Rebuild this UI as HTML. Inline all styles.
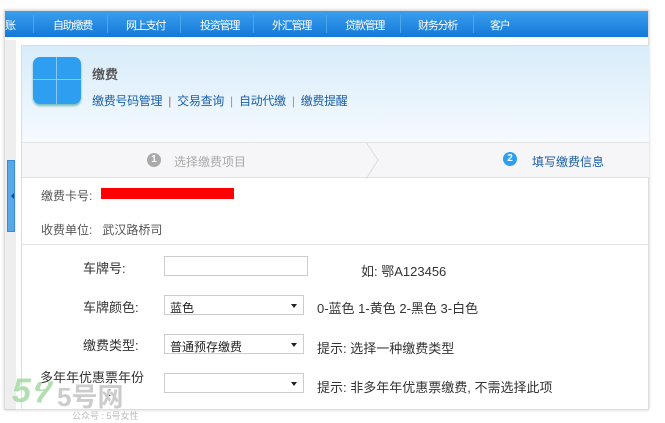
<!DOCTYPE html>
<html><head><meta charset="utf-8"><style>
*{margin:0;padding:0;box-sizing:border-box}
body{width:665px;height:423px;background:#fff;font-family:"Liberation Sans","Noto Sans CJK SC",sans-serif;font-size:12px;color:#333;position:relative;overflow:hidden}
.frame{position:absolute;left:4px;top:10px;width:645px;height:400px;border:1px solid #ddd;box-shadow:0 0 3px #ccc}
.nav{position:absolute;left:5px;top:11px;width:643px;height:26px;background:linear-gradient(#3aa0ee,#1478d8);color:#fff;font-size:11px;letter-spacing:-1.2px}
.nav span{position:absolute;top:6px}
.nav i{position:absolute;top:4px;width:1px;height:18px;background:#0f63b8;border-right:1px solid #4aa8ee}
.strip{position:absolute;left:5px;top:40px;width:11px;height:370px;background-image:radial-gradient(#bbb 0.6px,transparent 0.7px);background-size:2px 2px}
.handle{position:absolute;left:7px;top:160px;width:8px;height:72px;background:#5aa8e8;border:1px solid #3a8ad8}
.handle:after{content:"";position:absolute;left:0px;top:32px;border:3px solid transparent;border-right-color:#0c4a9a}
.main{position:absolute;left:21px;top:45px;width:627px;height:365px;border-left:1px solid #ddd;border-top:1px solid #ddd}
.hdr{position:absolute;left:0;top:0;width:627px;height:96px;background:linear-gradient(#d8ecfa,#f5fafe)}
.icon{position:absolute;left:11px;top:11px;width:48px;height:47px;border-radius:7px;background:#2d9ef0;box-shadow:0 2px 2px #7bb}
.icon:before{content:"";position:absolute;left:23px;top:0;width:1px;height:47px;background:#8cc8f6}
.icon:after{content:"";position:absolute;left:0;top:22px;width:48px;height:1px;background:#8cc8f6}
.steps{position:absolute;left:0;top:96px;width:627px;height:36px;background:#f6f5f8;border-top:1px solid #e2e2e2;border-bottom:1px solid #e2e2e2}
.circ{position:absolute;width:14px;height:14px;border-radius:7px;color:#fff;font-size:10px;text-align:center;line-height:14px;font-weight:bold}
.sel{position:absolute;left:164px;width:140px;height:20px;border:1px solid #ccc;font-size:12px;padding:3px 5px;color:#222}
.sel:after{content:"";position:absolute;right:6px;top:8px;border:3px solid transparent;border-top:4px solid #222}
.lbl{position:absolute;font-size:13px;color:#333}
</style></head><body>
<div class="frame"></div>
<div class="nav">
<span style="left:0">账</span><i style="left:28px"></i>
<span style="left:48px">自助缴费</span><i style="left:102px"></i>
<span style="left:121px">网上支付</span><i style="left:175px"></i>
<span style="left:195px">投资管理</span><i style="left:248px"></i>
<span style="left:267px">外汇管理</span><i style="left:321px"></i>
<span style="left:340px">贷款管理</span><i style="left:395px"></i>
<span style="left:413px">财务分析</span><i style="left:468px"></i>
<span style="left:485px">客户</span>
</div>
<div class="strip"></div><div class="handle"></div>
<div class="main">
<div class="hdr">
<div class="icon"></div>
<div style="position:absolute;left:70px;top:18px;font-size:13px;font-weight:bold;color:#555">缴费</div>
<div style="position:absolute;left:70px;top:46px;font-size:12px;color:#1a5fa8;letter-spacing:-0.3px">缴费号码管理 &nbsp;<span style="color:#a66">|</span>&nbsp; 交易查询 &nbsp;<span style="color:#999">|</span>&nbsp; 自动代缴 &nbsp;<span style="color:#999">|</span>&nbsp; 缴费提醒</div>
</div>
<div class="steps">
<div class="circ" style="left:125px;top:10px;background:#aaa">1</div>
<div style="position:absolute;left:152px;top:10px;color:#aaa">选择缴费项目</div>
<svg style="position:absolute;left:342px;top:-1px" width="16" height="37"><polyline points="2,0 14,18 2,37" fill="none" stroke="#ddd"/></svg>
<div class="circ" style="left:481px;top:9px;background:#2d9ef0">2</div>
<div style="position:absolute;left:510px;top:10px;color:#1a5fa8">填写缴费信息</div>
</div>
<div style="position:absolute;left:19px;top:141px;color:#555">缴费卡号:</div>
<div style="position:absolute;left:79px;top:142px;width:133px;height:11px;background:#f00"></div>
<div style="position:absolute;left:19px;top:175px;color:#555">收费单位:&nbsp;&nbsp; 武汉路桥司</div>
<div style="position:absolute;left:0;top:198px;width:627px;height:1px;background:#e2e2e2"></div>
</div>
<div class="lbl" style="left:83px;top:258px">车牌号:</div>
<div style="position:absolute;left:164px;top:256px;width:144px;height:20px;border:1px solid #ccc"></div>
<div class="lbl" style="left:361px;top:261px">如: 鄂A123456</div>
<div class="lbl" style="left:83px;top:297px">车牌颜色:</div>
<div class="sel" style="top:295px">蓝色</div>
<div class="lbl" style="left:317px;top:298px">0-蓝色 1-黄色 2-黑色 3-白色</div>
<div class="lbl" style="left:83px;top:335px">缴费类型:</div>
<div class="sel" style="top:334px">普通预存缴费</div>
<div class="lbl" style="left:317px;top:338px">提示: 选择一种缴费类型</div>
<div class="lbl" style="left:40px;top:367px">多年年优惠票年份</div>
<div class="lbl" style="left:108px;top:384px">:</div>
<div class="sel" style="top:373px"></div>
<div class="lbl" style="left:317px;top:377px">提示: 非多年年优惠票缴费, 不需选择此项</div>
<div style="position:absolute;left:12px;top:372px;font-size:34px;font-weight:bold;color:#9ed89e;font-style:italic;opacity:.8">5ሃ</div>
<div style="position:absolute;left:57px;top:377px;font-size:26px;font-weight:bold;color:#ccc">5号网</div>
<div style="position:absolute;left:72px;top:409px;font-size:9px;color:#bbb">公众号 : 5号女性</div>
</body></html>
